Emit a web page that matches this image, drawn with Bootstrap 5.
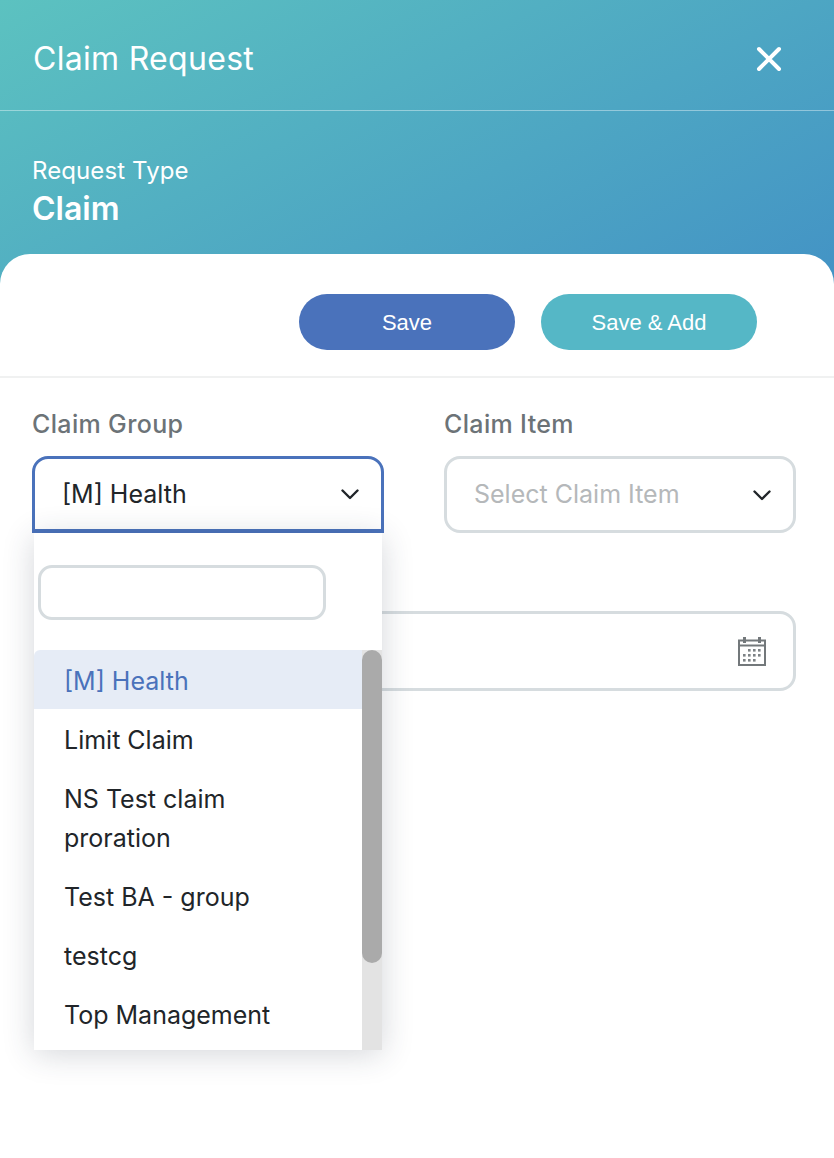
<!DOCTYPE html>
<html lang="en">
<head>
  <meta charset="UTF-8" />
  <meta name="viewport" content="width=device-width, initial-scale=1.0"/>
  <title>Claim Request</title>
  <link href="https://cdn.jsdelivr.net/npm/bootstrap@5.3.3/dist/css/bootstrap.min.css" rel="stylesheet">
  <style>
    body {
      font-family: "Inter", "Noto Sans", sans-serif;
      background: #fff;
    }
    #claimPage {
      min-height: 1158px;
      background: #fff linear-gradient(152deg, #5cc2c0, #4393c5) no-repeat;
      background-size: 100% 284px;
    }
    .top-bar {
      height: 111px;
      padding: 8px 52px 0 33px;
      border-bottom: 1px solid rgba(255,255,255,.4);
      color: #fff;
      font-size: 32px;
      letter-spacing: .3px;
    }
    .type-block {
      height: 143px;
      padding: 44px 32px 0;
      color: #fff;
    }
    .type-label { font-size: 24px; line-height: 32px; letter-spacing: .1px; }
    .type-value { font-size: 32px; line-height: 44px; font-weight: 600; }
    .white-panel {
      border-radius: 30px 30px 0 0;
      background: #fff;
    }
    .action-row {
      padding: 40px 77px 26px 0;
      gap: 26px;
      border-bottom: 2px solid #f0f1f1;
    }
    .save-btn {
      width: 216px;
      height: 56px;
      border: 0;
      color: #fff;
      font-family: "Liberation Sans", Arial, sans-serif;
      font-size: 22px;
    }
    .save-main, .save-main:hover { background: #4a72bb; color: #fff; }
    .save-add, .save-add:hover { background: #55b7c6; color: #fff; }
    .form-area { padding: 28px 38px 0 32px; }
    .field-grid {
      display: grid;
      grid-template-columns: 352px 352px;
      column-gap: 60px;
    }
    .field-label {
      color: #6c7377;
      font-size: 25px;
      font-weight: 500;
      letter-spacing: .35px;
      line-height: 36px;
      margin-bottom: 14px;
    }
    .fake-select {
      height: 77px;
      padding: 1px 22px 0 27px;
      border: 3px solid #d6dcdf;
      border-radius: 16px;
      background: #fff;
      font-size: 25px;
      color: #212529;
    }
    .fake-select.is-open {
      border-color: #4a72bb;
      border-bottom-width: 4px;
      border-radius: 16px 16px 0 0;
    }
    .fake-select .hint { color: #b5b8ba; }
    .date-box {
      height: 80px;
      margin-top: 78px;
      margin-left: 60px;
      padding-right: 27px;
      border: 3px solid #d6dcdf;
      border-radius: 16px;
    }
    .select-wrap { z-index: 5; }
    .drop-panel {
      top: 77px;
      left: 2px;
      width: 348px;
      height: 517px;
      background: #fff;
      box-shadow: 0 4px 30px rgba(40,50,70,.2);
      overflow: hidden;
    }
    .drop-search { padding: 32px 56px 30px 4px; }
    .drop-search input {
      height: 55px;
      border: 3px solid #d6dcdf;
      border-radius: 14px;
    }
    .drop-option {
      padding: 12px 44px 8px 30px;
      border: 0;
      border-radius: 0;
      font-size: 25px;
      line-height: 39px;
      color: #212529;
    }
    .list-group-item.drop-option.picked { background: #e6ecf6; color: #4a72bb; }
    .scroll-track {
      top: 117px;
      right: 0;
      width: 20px;
      bottom: 0;
      background: #e3e3e3;
    }
    .scroll-thumb {
      height: 313px;
      border-radius: 10px;
      background: #aaa;
    }
  </style>
</head>
<body>

<div id="claimPage" class="d-flex flex-column">
  <div class="top-bar d-flex align-items-center justify-content-between">
    <span>Claim Request</span>
    <svg width="26" height="26" viewBox="0 0 26 26" fill="none" stroke="#fff" stroke-width="4" stroke-linecap="round"><path d="M3 3l20 20M23 3L3 23"/></svg>
  </div>

  <div class="type-block">
    <div class="type-label">Request Type</div>
    <div class="type-value">Claim</div>
  </div>

  <div class="white-panel flex-grow-1">
    <div class="action-row d-flex justify-content-end">
      <button class="btn rounded-pill save-btn save-main">Save</button>
      <button class="btn rounded-pill save-btn save-add">Save &amp; Add</button>
    </div>

    <div class="form-area">
      <div class="field-grid">
        <div>
          <div class="field-label">Claim Group</div>
          <div class="select-wrap position-relative">
            <div class="fake-select is-open d-flex align-items-center justify-content-between">
              <span>[M] Health</span>
              <svg width="18" height="11" viewBox="0 0 18 11" fill="none" stroke="#212529" stroke-width="2.4" stroke-linecap="round" stroke-linejoin="round"><path d="M1.5 1.5L9 9l7.5-7.5"/></svg>
            </div>
            <div class="drop-panel position-absolute">
              <div class="drop-search"><input type="text" class="form-control"></div>
              <div class="list-group">
                <div class="list-group-item drop-option picked">[M] Health</div>
                <div class="list-group-item drop-option">Limit Claim</div>
                <div class="list-group-item drop-option">NS Test claim proration</div>
                <div class="list-group-item drop-option">Test BA - group</div>
                <div class="list-group-item drop-option">testcg</div>
                <div class="list-group-item drop-option">Top Management</div>
              </div>
              <div class="scroll-track position-absolute"><div class="scroll-thumb"></div></div>
            </div>
          </div>
        </div>
        <div>
          <div class="field-label">Claim Item</div>
          <div class="fake-select d-flex align-items-center justify-content-between">
            <span class="hint">Select Claim Item</span>
            <svg width="18" height="11" viewBox="0 0 18 11" fill="none" stroke="#212529" stroke-width="2.4" stroke-linecap="round" stroke-linejoin="round"><path d="M1.5 1.5L9 9l7.5-7.5"/></svg>
          </div>
        </div>
      </div>

      <div class="date-box d-flex align-items-center justify-content-end">
        <svg width="28" height="29" viewBox="0 0 28 29" fill="none">
          <path d="M1 3.5h26v24.5H1z" stroke="#73787b" stroke-width="2"/>
          <path d="M1 8.5h26" stroke="#73787b" stroke-width="2"/>
          <path d="M6.5 0v6M21.5 0v6" stroke="#73787b" stroke-width="3"/>
          <g fill="#7d8285">
            <rect x="10" y="12" width="2.6" height="2.6"/><rect x="15" y="12" width="2.6" height="2.6"/><rect x="20" y="12" width="2.6" height="2.6"/>
            <rect x="5" y="17" width="2.6" height="2.6"/><rect x="10" y="17" width="2.6" height="2.6"/><rect x="15" y="17" width="2.6" height="2.6"/><rect x="20" y="17" width="2.6" height="2.6"/>
            <rect x="5" y="22" width="2.6" height="2.6"/><rect x="10" y="22" width="2.6" height="2.6"/><rect x="15" y="22" width="2.6" height="2.6"/>
          </g>
        </svg>
      </div>
    </div>
  </div>
</div>

<script src="https://cdn.jsdelivr.net/npm/bootstrap@5.3.3/dist/js/bootstrap.bundle.min.js"></script>
</body>
</html>
